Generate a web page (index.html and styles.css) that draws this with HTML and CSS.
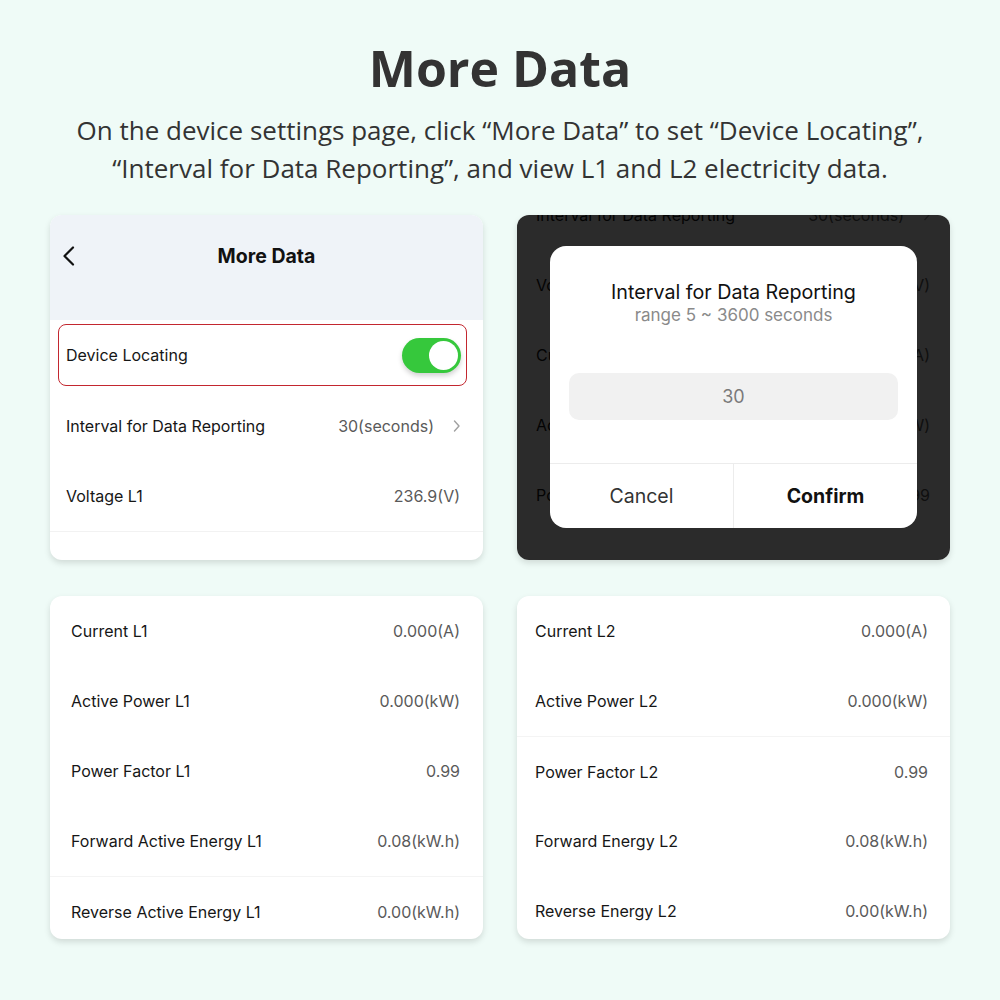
FILE: index.html
```html
<!DOCTYPE html>
<html lang="en">
<head>
<meta charset="utf-8">
<title>More Data</title>
<link rel="stylesheet" href="styles.css">
</head>
<body>
<div class="page">
  <header class="intro">
    <h1 class="intro-title">More Data</h1>
    <p class="intro-text">On the device settings page, click “More Data” to set “Device Locating”,<br>“Interval for Data Reporting”, and view L1 and L2 electricity data.</p>
  </header>

  <main class="grid">
    <!-- top-left -->
    <section class="card card-settings">
      <div class="nav">
        <svg class="nav-back" width="14" height="20" viewBox="0 0 14 20"><path d="M11 1.5 L2.5 10 L11 18.5" fill="none" stroke="#111" stroke-width="2.2" stroke-linecap="round" stroke-linejoin="round"/></svg>
        <div class="nav-title">More Data</div>
      </div>
      <div class="row row-highlight">
        <span class="label">Device Locating</span>
        <span class="toggle"><span class="knob"></span></span>
      </div>
      <div class="row">
        <span class="label">Interval for Data Reporting</span>
        <span class="value">30(seconds)<svg class="chev" width="8" height="14" viewBox="0 0 8 14"><path d="M1.5 2 L6 7 L1.5 12" fill="none" stroke="#a0a0a0" stroke-width="1.4" stroke-linecap="round" stroke-linejoin="round"/></svg></span>
      </div>
      <div class="row">
        <span class="label">Voltage L1</span>
        <span class="value">236.9(V)</span>
      </div>
      <div class="row row-sep"></div>
    </section>

    <!-- top-right -->
    <section class="card card-dialog">
      <div class="under">
        <div class="row"><span class="label">Interval for Data Reporting</span><span class="value">30(seconds)<svg class="chev" width="8" height="14" viewBox="0 0 8 14"><path d="M1.5 2 L6 7 L1.5 12" fill="none" stroke="#a0a0a0" stroke-width="1.4"/></svg></span></div>
        <div class="row"><span class="label">Voltage L1</span><span class="value">236.9(V)</span></div>
        <div class="row"><span class="label">Current L1</span><span class="value">0.000(A)</span></div>
        <div class="row"><span class="label">Active Power L1</span><span class="value">0.000(kW)</span></div>
        <div class="row"><span class="label">Power Factor L1</span><span class="value">0.99</span></div>
      </div>
      <div class="dim"></div>
      <div class="dialog">
        <div class="dialog-title">Interval for Data Reporting</div>
        <div class="dialog-sub">range 5 ~ 3600 seconds</div>
        <div class="dialog-input">30</div>
        <div class="dialog-actions">
          <div class="btn">Cancel</div>
          <div class="btn btn-strong">Confirm</div>
        </div>
      </div>
    </section>

    <!-- bottom-left -->
    <section class="card card-list card-l1">
      <div class="row"><span class="label">Current L1</span><span class="value">0.000(A)</span></div>
      <div class="row"><span class="label">Active Power L1</span><span class="value">0.000(kW)</span></div>
      <div class="row"><span class="label">Power Factor L1</span><span class="value">0.99</span></div>
      <div class="row"><span class="label">Forward Active Energy L1</span><span class="value">0.08(kW.h)</span></div>
      <div class="row row-line"><span class="label">Reverse Active Energy L1</span><span class="value">0.00(kW.h)</span></div>
    </section>

    <!-- bottom-right -->
    <section class="card card-list card-l2">
      <div class="row"><span class="label">Current L2</span><span class="value">0.000(A)</span></div>
      <div class="row"><span class="label">Active Power L2</span><span class="value">0.000(kW)</span></div>
      <div class="row row-line"><span class="label">Power Factor L2</span><span class="value">0.99</span></div>
      <div class="row"><span class="label">Forward Energy L2</span><span class="value">0.08(kW.h)</span></div>
      <div class="row"><span class="label">Reverse Energy L2</span><span class="value">0.00(kW.h)</span></div>
    </section>
  </main>
</div>
</body>
</html>
```
FILE: styles.css
```css
* { box-sizing: border-box; }
html, body { margin: 0; padding: 0; }
body {
  background: #effbf7;
  width: 1000px;
  height: 1000px;
  overflow: hidden;
  font-family: Inter, "Liberation Sans", sans-serif;
}
.page { padding: 36px 50px 0; }

.intro { text-align: center; color: #333333; font-family: "Open Sans", "Liberation Sans", sans-serif; }
.intro-title {
  margin: 0;
  font-size: 50px;
  line-height: 65px;
  font-weight: 700;
}
.intro-text {
  margin: 10px 0 0;
  font-size: 26px;
  line-height: 38px;
  font-weight: 400;
  white-space: nowrap;
}

.grid {
  margin-top: 28px;
  display: grid;
  grid-template-columns: 433px 433px;
  grid-template-rows: 345px 343px;
  column-gap: 34px;
  row-gap: 36px;
}

.card {
  background: #ffffff;
  border-radius: 12px;
  overflow: hidden;
  box-shadow: 0 3px 6px rgba(0, 0, 0, 0.13);
  position: relative;
}

.row {
  height: 70px;
  display: flex;
  align-items: center;
  justify-content: space-between;
  padding: 0 23px 0 16px;
  font-size: 16px;
}
.label { color: #161616; }
.value { color: #5a5a5a; display: flex; align-items: center; }
.chev { margin-left: 19px; margin-right: -1px; }

/* settings card */
.nav {
  height: 105px;
  background: #eff3f8;
  position: relative;
  padding-top: 29px;
  text-align: center;
}
.nav-back { position: absolute; left: 12px; top: 31px; }
.nav-title { font-size: 19.5px; font-weight: 700; color: #111; line-height: 24px; }

.row-highlight {
  height: 62px;
  margin: 4px 16px 5px 8px;
  border: 1px solid #c3272f;
  border-radius: 8px;
  padding: 0 5px 0 7px;
}
.toggle {
  width: 59px;
  height: 35px;
  border-radius: 18px;
  background: #36c83c;
  position: relative;
  box-shadow: 0 3px 5px rgba(0, 0, 0, 0.18);
}
.knob {
  position: absolute;
  right: 3px;
  top: 3px;
  width: 29px;
  height: 29px;
  border-radius: 50%;
  background: #ffffff;
}
.row-sep { height: 1px; border-top: 1px solid #f2f2f2; padding: 0; }

/* dialog card */
.card-dialog { background: #ffffff; }
.under { margin-top: -35px; }
.under .row { padding: 0 20px 0 19px; }
.dim { position: absolute; inset: 0; background: rgba(0, 0, 0, 0.83); }
.dialog {
  position: absolute;
  left: 33px;
  top: 31px;
  width: 367px;
  height: 282px;
  background: #ffffff;
  border-radius: 16px;
  padding-top: 34px;
  text-align: center;
  display: flex;
  flex-direction: column;
}
.dialog-title { font-size: 19.7px; line-height: 24px; color: #111; }
.dialog-sub { font-size: 17px; line-height: 22px; color: #8a8a8a; }
.dialog-input {
  margin: 47px 19px 43px;
  height: 47px;
  border-radius: 10px;
  background: #f1f1f1;
  color: #7a7a7a;
  font-size: 18px;
  line-height: 47px;
}
.dialog-actions {
  flex: 1;
  display: flex;
  border-top: 1px solid #ececec;
}
.btn {
  flex: 1;
  display: flex;
  align-items: center;
  justify-content: center;
  font-size: 19.5px;
  color: #333;
}
.btn + .btn { border-left: 1px solid #ececec; }
.btn-strong { font-weight: 700; color: #111; }

/* list cards */
.card-l1 .row { padding: 0 23px 0 21px; }
.card-l2 .row { padding: 0 22px 0 18px; }
.row-line { border-top: 1px solid #f4f4f4; }
```
